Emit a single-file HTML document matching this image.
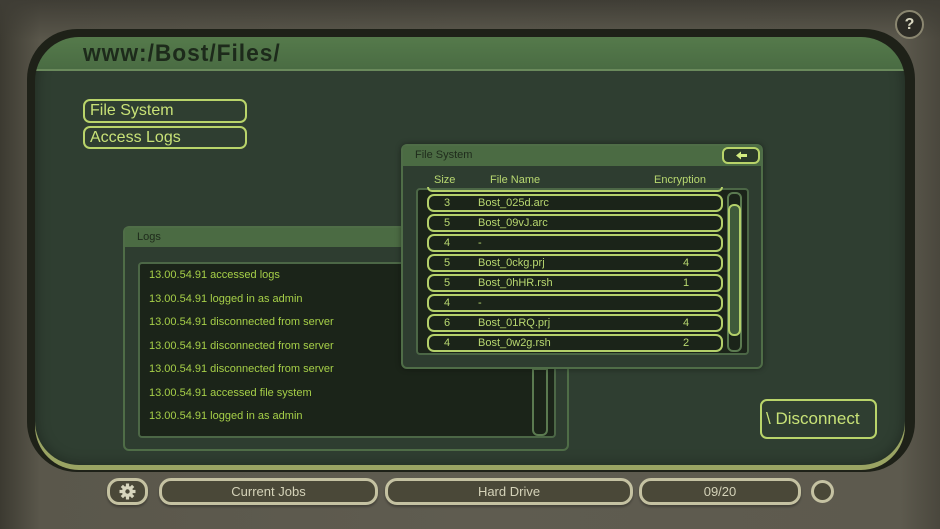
<!DOCTYPE html>
<html><head><meta charset="utf-8"><style>
*{margin:0;padding:0;box-sizing:border-box}
body{width:940px;height:529px;overflow:hidden;position:relative;font-family:"Liberation Sans",sans-serif;
background:linear-gradient(90deg,#3c3a31 0,#5a574b 40px,#5f5c50 50%,#5d5a4e 900px,#4a473d 940px);}
.top{position:absolute;left:0;top:0;width:940px;height:40px;background:linear-gradient(#3f3d35,rgba(0,0,0,0))}
.a{position:absolute}
.frame{left:27px;top:29px;width:888px;height:443px;border-radius:50px;background:#1e2118}
.bot{left:35px;top:420px;width:870px;height:50px;border-radius:0 0 44px 44px;background:#9aa463}
.screen{left:35px;top:37px;width:870px;height:428px;border-radius:44px;background:#2f3e31;overflow:hidden;box-shadow:inset 0 0 14px rgba(0,0,0,.35)}
.hdr{left:0;top:0;width:870px;height:34px;background:linear-gradient(#557a4b,#4a6c43);border-bottom:2px solid #6a8a5c}
.url{left:48px;top:3px;font-size:24px;color:#1d2a1b;letter-spacing:1px;font-weight:bold;transform:scaleX(.95);transform-origin:left}
.btn{border:2px solid #b9d46a;border-radius:7px;color:#c8e277;font-size:16px;padding-left:5px;line-height:19px}
.win{background:#2e3d30;border:2px solid #4f6d47;border-radius:6px}
.tb{background:#4b6b43;height:19px;color:#1f2b1c;font-size:11px;padding:3px 12px}
.row{position:absolute;left:427px;width:296px;height:18px;border:2px solid #b4d06a;border-radius:7px;color:#b8d870;font-size:11px;line-height:14px}
.row span{position:absolute}
.log{position:absolute;left:149px;color:#a6cf48;font-size:11px}
.bb{position:absolute;top:478px;height:27px;border:3px solid #c5c2a2;border-radius:12px;background:#4a4838;color:#d4d2b8;font-size:13px;text-align:center;line-height:21px;box-shadow:0 2px 2px rgba(0,0,0,.3)}
</style></head><body>
<div class="top"></div>
<div class="a frame"></div>
<div class="a bot"></div>
<div class="a screen">
 <div class="a hdr"></div>
 <div class="a url">www:/Bost/Files/</div>
</div>
<div class="a btn" style="left:83px;top:99px;width:164px;height:24px">File System</div>
<div class="a btn" style="left:83px;top:126px;width:164px;height:23px">Access Logs</div>

<div class="a win" style="left:123px;top:226px;width:446px;height:225px">
 <div class="tb">Logs</div>
 <div class="a" style="left:13px;top:34px;width:418px;height:176px;background:#1b2419;border:2px solid #4c6746;border-radius:4px"></div>
 <div class="a" style="left:407px;top:140px;width:16px;height:68px;border:2px solid #5b7a50;border-radius:0 0 6px 6px"></div>
</div>
<div class="log" style="top:269px">13.00.54.91 accessed logs</div>
<div class="log" style="top:293px">13.00.54.91 logged in as admin</div>
<div class="log" style="top:316px">13.00.54.91 disconnected from server</div>
<div class="log" style="top:340px">13.00.54.91 disconnected from server</div>
<div class="log" style="top:363px">13.00.54.91 disconnected from server</div>
<div class="log" style="top:387px">13.00.54.91 accessed file system</div>
<div class="log" style="top:410px">13.00.54.91 logged in as admin</div>

<div class="a win" style="left:401px;top:144px;width:362px;height:225px;box-shadow:0 0 6px rgba(0,0,0,.4)">
 <div class="tb" style="height:20px">File System</div>
 <div class="a" style="left:319px;top:1px;width:38px;height:17px;border:2px solid #b9d46a;border-radius:6px;background:#2a3a2a">
  <svg width="34" height="13" style="position:absolute;left:0;top:0"><path d="M12 6.5 L17 2.5 V5 H23 V8 H17 V10.5 Z" fill="#d2ec80"/></svg>
 </div>
 <div class="a" style="left:31px;top:28px;color:#b8d870;font-size:11px">Size</div>
 <div class="a" style="left:87px;top:28px;color:#b8d870;font-size:11px">File Name</div>
 <div class="a" style="left:251px;top:28px;color:#b8d870;font-size:11px">Encryption</div>
 <div class="a" style="left:13px;top:42px;width:333px;height:167px;background:#1b2419;border:2px solid #4c6746;border-radius:4px"></div>
 <div class="a" style="left:324px;top:46px;width:15px;height:160px;border:2px solid #5b7a50;border-radius:6px"></div>
 <div class="a" style="left:325px;top:58px;width:13px;height:132px;border:2px solid #b4d06a;border-radius:6px;background:#3f5a3a"></div>
</div>
<div class="a" style="left:427px;top:187px;width:296px;height:5px;border:2px solid #b4d06a;border-top:none;border-radius:0 0 6px 6px"></div>
<div class="row" style="top:194px"><span style="left:15px">3</span><span style="left:49px">Bost_025d.arc</span></div>
<div class="row" style="top:214px"><span style="left:15px">5</span><span style="left:49px">Bost_09vJ.arc</span></div>
<div class="row" style="top:234px"><span style="left:15px">4</span><span style="left:49px">-</span></div>
<div class="row" style="top:254px"><span style="left:15px">5</span><span style="left:49px">Bost_0ckg.prj</span><span style="left:254px">4</span></div>
<div class="row" style="top:274px"><span style="left:15px">5</span><span style="left:49px">Bost_0hHR.rsh</span><span style="left:254px">1</span></div>
<div class="row" style="top:294px"><span style="left:15px">4</span><span style="left:49px">-</span></div>
<div class="row" style="top:314px"><span style="left:15px">6</span><span style="left:49px">Bost_01RQ.prj</span><span style="left:254px">4</span></div>
<div class="row" style="top:334px"><span style="left:15px">4</span><span style="left:49px">Bost_0w2g.rsh</span><span style="left:254px">2</span></div>

<div class="a btn" style="left:760px;top:399px;width:117px;height:40px;line-height:36px;font-size:17px;padding-left:4px">\ Disconnect</div>

<div class="bb" style="left:107px;width:41px">
 <svg width="35" height="21" viewBox="0 0 35 21"><g transform="translate(17.5 10.5)" fill="#d8d6be"><circle r="5.5"/><rect x="-1.6" y="-8" width="3.2" height="16"/><rect x="-1.6" y="-8" width="3.2" height="16" transform="rotate(45)"/><rect x="-1.6" y="-8" width="3.2" height="16" transform="rotate(90)"/><rect x="-1.6" y="-8" width="3.2" height="16" transform="rotate(135)"/><circle r="2.2" fill="#4a4838"/></g></svg>
</div>
<div class="bb" style="left:159px;width:219px">Current Jobs</div>
<div class="bb" style="left:385px;width:248px">Hard Drive</div>
<div class="bb" style="left:639px;width:162px">09/20</div>
<div class="a" style="left:811px;top:480px;width:23px;height:23px;border:3px solid #c5c2a2;border-radius:50%;background:#4a4838"></div>
<div class="a" style="left:895px;top:10px;width:29px;height:29px;border:2px solid #8a8670;border-radius:50%;background:#2c2b25;color:#d8d6c0;font-size:16px;font-weight:bold;text-align:center;line-height:25px">?</div>
</body></html>
